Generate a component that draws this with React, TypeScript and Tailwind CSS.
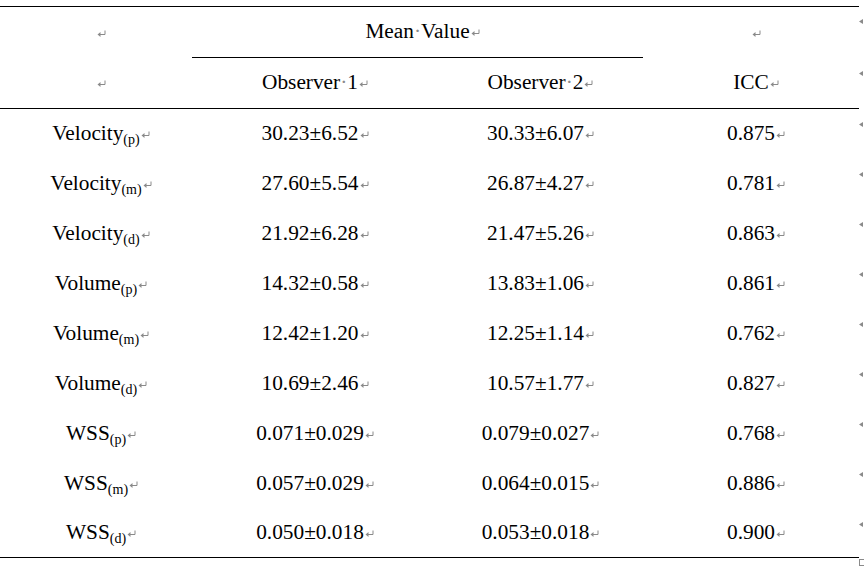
const rows = [
  { name: "Velocity", sub: "p", a: "30.23±6.52", b: "30.33±6.07", icc: "0.875" },
  { name: "Velocity", sub: "m", a: "27.60±5.54", b: "26.87±4.27", icc: "0.781" },
  { name: "Velocity", sub: "d", a: "21.92±6.28", b: "21.47±5.26", icc: "0.863" },
  { name: "Volume", sub: "p", a: "14.32±0.58", b: "13.83±1.06", icc: "0.861" },
  { name: "Volume", sub: "m", a: "12.42±1.20", b: "12.25±1.14", icc: "0.762" },
  { name: "Volume", sub: "d", a: "10.69±2.46", b: "10.57±1.77", icc: "0.827" },
  { name: "WSS", sub: "p", a: "0.071±0.029", b: "0.079±0.027", icc: "0.768" },
  { name: "WSS", sub: "m", a: "0.057±0.029", b: "0.064±0.015", icc: "0.886" },
  { name: "WSS", sub: "d", a: "0.050±0.018", b: "0.053±0.018", icc: "0.900" },
];

// Word's paragraph mark, kept out of the centring width
const Mark = () => (
  <svg
    width="9"
    height="7"
    viewBox="0 0 9 7"
    className="inline-block align-[2px] ml-[1px] mr-[-10px]"
  >
    <path d="M8 0.5V4.5H3" fill="none" stroke="#8a8a8a" strokeWidth="1" />
    <path d="M0.5 4.5L3.5 2V7Z" fill="#8a8a8a" />
  </svg>
);

const Dot = () => <span className="text-[#8a8a8a]">·</span>;

const RowEnd = () => (
  <div className="w-[5px] pt-[13px]">
    <svg width="5" height="5" viewBox="0 0 5 5">
      <path d="M0 2.5L4 0V5Z" fill="#8a8a8a" />
    </svg>
  </div>
);

const Cell = ({ children, className = "" }: { children?: React.ReactNode; className?: string }) => (
  <div className={`flex items-center justify-center ${className}`}>
    <span>
      {children}
      <Mark />
    </span>
  </div>
);

export default function App() {
  return (
    <div
      className="w-[864px] h-[566px] bg-white text-black text-[21.33px] overflow-hidden pt-[6px]"
      style={{ fontFamily: '"Liberation Serif", "Times New Roman", serif' }}
    >
      <div className="flex">
        <div className="grid grid-cols-[192px_236px_215px_216px] w-[859px] h-[52px] border-t border-black">
          <Cell />
          <Cell className="col-span-2 border-b border-black">
            Mean
            <Dot />
            Value
          </Cell>
          <Cell />
        </div>
        <RowEnd />
      </div>

      <div className="flex">
        <div className="grid grid-cols-[192px_236px_215px_216px] w-[859px] h-[51px] border-b border-black">
          <Cell />
          <Cell>
            Observer
            <Dot />1
          </Cell>
          <Cell>
            Observer
            <Dot />2
          </Cell>
          <Cell>ICC</Cell>
        </div>
        <RowEnd />
      </div>

      {rows.map((r, i) => (
        <div key={i} className="flex">
          <div
            className={`grid grid-cols-[192px_236px_215px_216px] w-[859px] ${
              i === rows.length - 1 ? "h-[49px] border-b border-black" : "h-[50px]"
            }`}
          >
            <Cell>
              {r.name}
              <sub className="text-[14px]">({r.sub})</sub>
            </Cell>
            <Cell>{r.a}</Cell>
            <Cell>{r.b}</Cell>
            <Cell>{r.icc}</Cell>
          </div>
          <RowEnd />
        </div>
      ))}

      <div className="flex justify-end">
        <div className="w-[6px] h-[7px] mt-[1px] mr-[-1px] border border-[#8a8a8a]" />
      </div>
    </div>
  );
}
